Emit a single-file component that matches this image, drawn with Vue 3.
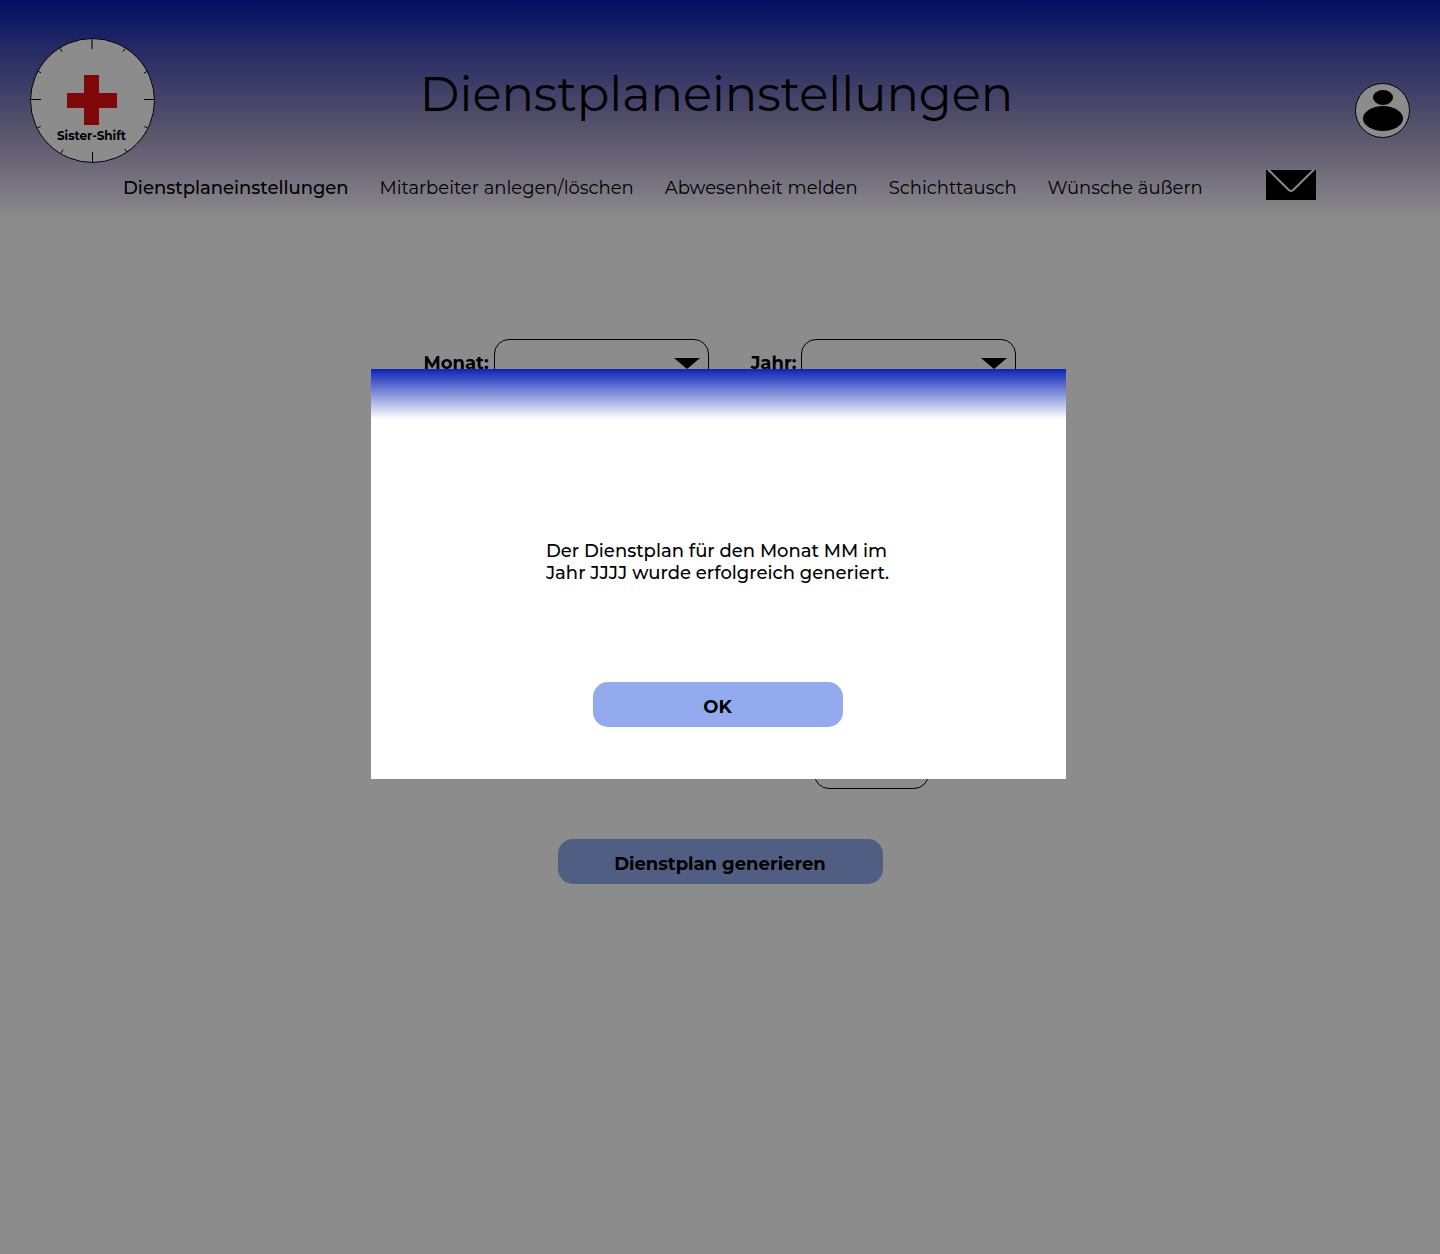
<script setup>
import { ref } from 'vue'

const navItems = [
  'Dienstplaneinstellungen',
  'Mitarbeiter anlegen/löschen',
  'Abwesenheit melden',
  'Schichttausch',
  'Wünsche äußern',
]
const active = ref(0)
const dialogOpen = ref(true)
</script>

<template>
  <div class="page">
    <header class="header">
      <div class="top">
        <svg class="logo" viewBox="0 0 125 125" role="img" aria-label="Sister-Shift">
          <circle cx="62.5" cy="62.5" r="62" fill="#fff" stroke="#000" />
          <g stroke="#000" stroke-width="1">
            <path d="M62 1V11" stroke="#777" stroke-width="2" />
            <path d="M62.5 114V124M1 61.5H11M114 61.5H124" />
            <path d="M30 10.3l2 3.4M95 10.7l-2 3M8 33l3 2M117 33.3l-3 2M7.3 90l3.4-1.7M117.7 90.3l-3.4-2M31 115.3l2-3.5M96.7 113.8l-2-3" />
          </g>
          <path d="M54 37h15v18h18v15H69v17H54V70H37V55h17z" fill="#eb0f10" />
          <text class="logo-text" x="61.5" y="102" text-anchor="middle">Sister-Shift</text>
        </svg>
        <h1 class="title">Dienstplaneinstellungen</h1>
        <button class="avatar" type="button" aria-label="Profil">
          <svg viewBox="0 0 55 55">
            <circle cx="27.5" cy="27.5" r="27" fill="#fff" stroke="#000" />
            <ellipse cx="28" cy="14.5" rx="10" ry="7.5" />
            <ellipse cx="28" cy="35.5" rx="20" ry="12.5" />
          </svg>
        </button>
      </div>
      <div class="bar">
        <nav class="nav">
          <a
            v-for="(item, i) in navItems"
            :key="item"
            href="#"
            :class="{ active: i === active }"
            @click.prevent="active = i"
          >{{ item }}</a>
        </nav>
        <button class="mail" type="button" aria-label="Nachrichten">
          <svg viewBox="0 0 50 30">
            <path d="M0 0h50v30H0z" />
            <path d="M2 -0.5L22.5 19.7Q25 22 27.5 19.7L48 -0.5" fill="none" stroke="#fff" stroke-width="2" />
          </svg>
        </button>
      </div>
    </header>

    <main class="form">
      <div class="row">
        <div class="field">
          <label for="month">Monat:</label>
          <span class="select">
            <select id="month"></select>
            <svg viewBox="0 0 26 11"><path d="M0 0h26L13 11z" /></svg>
          </span>
        </div>
        <div class="field">
          <label for="year">Jahr:</label>
          <span class="select">
            <select id="year"></select>
            <svg viewBox="0 0 26 11"><path d="M0 0h26L13 11z" /></svg>
          </span>
        </div>
      </div>
      <input class="count" type="text" aria-label="Anzahl" />
      <button class="btn generate" type="button" @click="dialogOpen = true">Dienstplan generieren</button>
    </main>

    <div v-if="dialogOpen" class="scrim">
      <section class="dialog" role="dialog" aria-modal="true" aria-labelledby="dialog-text">
        <p id="dialog-text">Der Dienstplan für den Monat MM im<br />Jahr JJJJ wurde erfolgreich generiert.</p>
        <button class="btn ok" type="button" @click="dialogOpen = false">OK</button>
      </section>
    </div>
  </div>
</template>

<style>
body {
  margin: 0;
}
</style>

<style scoped>
.page {
  position: relative;
  min-height: 100vh;
  background: #fff;
  color: #000;
  font-family: Montserrat, Inter, sans-serif;
  font-size: 18px;
}
.page * {
  box-sizing: border-box;
}
button {
  padding: 0;
  border: 0;
  background: none;
  color: inherit;
  font: inherit;
  cursor: pointer;
}
svg {
  display: block;
}
.header {
  height: 220px;
  padding: 38px 30px 0;
  background: linear-gradient(#001bb8, #474eb6 50px, #aba2c6 140px, #ccc3e0 170px, #fff);
}
.top {
  display: grid;
  grid-template-columns: 125px 1fr 132px;
  height: 125px;
}
.logo {
  width: 125px;
  height: 125px;
}
.logo-text {
  font-size: 12px;
  font-weight: 700;
}
.title {
  margin: 24px 0 0;
  font-size: 48px;
  line-height: 64px;
  font-weight: 400;
  text-align: center;
}
.avatar {
  justify-self: end;
  width: 55px;
  height: 55px;
  margin-top: 45px;
}
.bar {
  display: flex;
  justify-content: space-between;
  align-items: flex-start;
  padding: 7px 94px 0 93px;
}
.nav {
  display: flex;
  gap: 31px;
  line-height: 36px;
}
.nav a {
  color: inherit;
  font-weight: 400;
  text-decoration: none;
  white-space: nowrap;
}
.nav .active {
  font-weight: 500;
}
.mail {
  width: 50px;
  height: 30px;
}
.form {
  display: flex;
  flex-direction: column;
  align-items: center;
  padding-top: 119px;
}
.row {
  display: flex;
  gap: 42px;
}
.field {
  display: flex;
  align-items: center;
  gap: 5px;
  font-weight: 700;
}
.field label {
  padding-bottom: 2px;
}
.select {
  position: relative;
}
.select select {
  display: block;
  width: 215px;
  height: 50px;
  border: 1px solid #000;
  border-radius: 15px;
  background: none;
  appearance: none;
}
.select svg {
  position: absolute;
  top: 19px;
  right: 9px;
  width: 26px;
  height: 11px;
  pointer-events: none;
}
.count {
  width: 115px;
  height: 50px;
  margin: 350px 0 50px 302px;
  border: 1px solid #000;
  border-radius: 15px;
  background: none;
  font: inherit;
}
.btn {
  height: 45px;
  padding-top: 4px;
  border-radius: 15px;
  background: #93abee;
  font-weight: 700;
}
.generate {
  width: 325px;
}
.scrim {
  position: absolute;
  inset: 0;
  display: flex;
  justify-content: center;
  align-items: flex-start;
  padding: 369px 3px 0 0;
  background: rgb(0 0 0 / 45%);
}
.dialog {
  display: flex;
  flex-direction: column;
  align-items: center;
  width: 695px;
  padding: 171px 2px 52px 0;
  background: linear-gradient(#0a25b8, #fff 50px);
}
.dialog p {
  margin: 0 0 98px;
  line-height: 22px;
  font-weight: 500;
}
.ok {
  width: 250px;
}
</style>
